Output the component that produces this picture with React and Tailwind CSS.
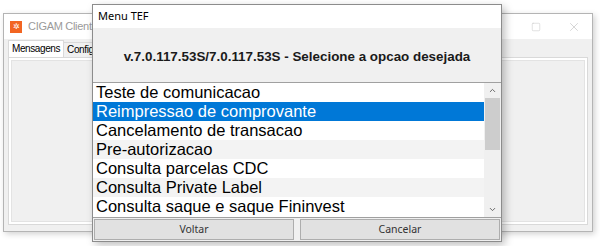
import { X, Square, ChevronUp, ChevronDown } from 'lucide-react';

const items = [
  'Teste de comunicacao',
  'Reimpressao de comprovante',
  'Cancelamento de transacao',
  'Pre-autorizacao',
  'Consulta parcelas CDC',
  'Consulta Private Label',
  'Consulta saque e saque Fininvest',
];

const App = () => {
  return (
    <div className="relative w-[600px] h-[246px] bg-white overflow-hidden font-['Liberation_Sans',Arial,sans-serif]">
      {/* Back window */}
      <div className="absolute left-[3px] top-[13px] w-[590px] h-[219px] border border-[#b4b4b4] bg-[#f0f0f0] shadow-[2px_2px_6px_rgba(0,0,0,0.18)] flex flex-col">
        <div className="h-[25px] bg-white flex items-center pl-[6px] shrink-0">
          <div className="w-[12px] h-[12px] bg-[#f26522] flex items-center justify-center text-white text-[8px] leading-none">
            ✲
          </div>
          <span className="ml-[6px] text-[11px] tracking-[-0.3px] text-[#9a9a9a]">CIGAM Cliente</span>
          <div className="ml-auto flex items-center gap-[26px] pr-[11px] text-[#c4c4c4]">
            <Square className="w-[10px] h-[10px]" strokeWidth={1.2} />
            <X className="w-[14px] h-[14px]" strokeWidth={1.2} />
          </div>
        </div>
        <div className="flex-1 flex flex-col px-[4px] pt-[2px] pb-[6px]">
          <div className="flex items-end h-[16px] text-[10px] tracking-[-0.4px] text-black">
            <div className="h-[17px] px-[3px] bg-white border border-b-0 border-[#d9d9d9] leading-[15px] relative z-10">Mensagens</div>
            <div className="h-[15px] px-[3px] border border-b-0 border-l-0 border-[#d9d9d9] leading-[14px]">Configuracoes</div>
          </div>
          <div className="flex-1 bg-white border border-[#d9d9d9] p-[2px]">
            <div className="w-full h-full bg-[#f0f0f0] border border-[#e3e3e3]"></div>
          </div>
        </div>
      </div>

      {/* TEF dialog */}
      <div className="absolute left-[92px] top-[4px] w-[410px] h-[238px] border border-[#8c8c8c] bg-[#f0f0f0] shadow-[3px_3px_8px_rgba(0,0,0,0.25)] flex flex-col">
        <div className="h-[23px] bg-white flex items-center pl-[5px] shrink-0">
          <span className="text-[11px] text-black font-['Noto_Sans',sans-serif]">Menu TEF</span>
        </div>
        <div className="h-[54px] flex items-center justify-center pt-[5px] shrink-0">
          <span className="text-[13.4px] font-bold text-[#1a1a1a]">
            v.7.0.117.53S/7.0.117.53S - Selecione a opcao desejada
          </span>
        </div>
        <div className="h-[136px] border-y border-[#a0a0a0] bg-white flex shrink-0">
          <div className="flex-1 flex flex-col">
            {items.map((item, index) => (
              <div
                key={item}
                className={`h-[19px] pl-[3px] text-[16.5px] leading-[19px] whitespace-nowrap ${
                  index === 1
                    ? 'bg-[#0078d7] text-white'
                    : index % 2 === 1
                    ? 'bg-[#f3f3f3] text-black'
                    : 'bg-white text-black'
                }`}
              >
                {item}
              </div>
            ))}
          </div>
          <div className="w-[17px] bg-[#f0f0f0] flex flex-col items-center">
            <div className="h-[15px] flex items-center justify-center text-[#606060]">
              <ChevronUp className="w-[9px] h-[9px]" strokeWidth={2.5} />
            </div>
            <div className="w-[15px] h-[52px] bg-[#cdcdcd]"></div>
            <div className="flex-1"></div>
            <div className="h-[15px] flex items-center justify-center text-[#606060]">
              <ChevronDown className="w-[9px] h-[9px]" strokeWidth={2.5} />
            </div>
          </div>
        </div>
        <div className="flex-1 flex gap-[6px] px-[1px] pt-[1px] pb-[1px]">
          <button className="flex-1 bg-[#e1e1e1] border border-[#adadad] text-[10.5px] text-[#333] font-['Noto_Sans',sans-serif]">
            Voltar
          </button>
          <button className="flex-1 bg-[#e1e1e1] border border-[#adadad] text-[10.5px] text-[#333] font-['Noto_Sans',sans-serif]">
            Cancelar
          </button>
        </div>
      </div>
    </div>
  );
};

export default App;
